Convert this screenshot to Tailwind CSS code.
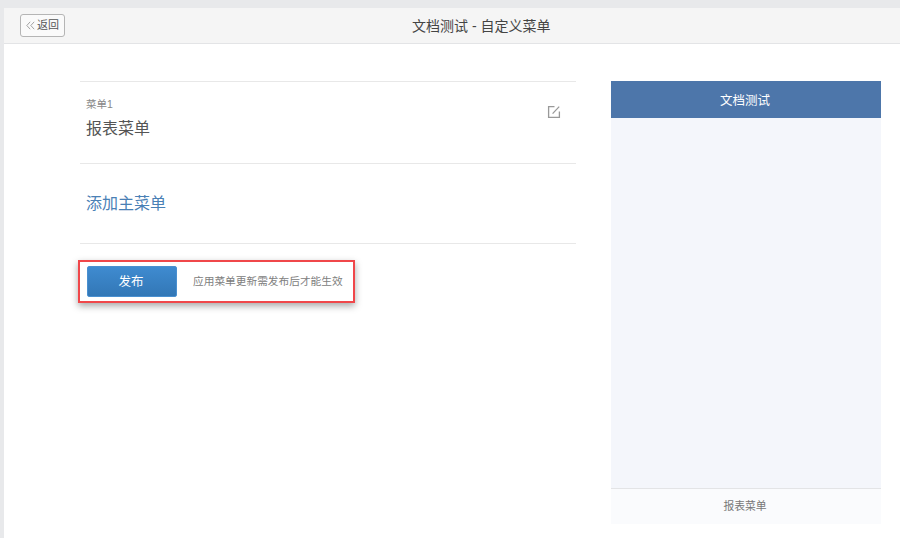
<!DOCTYPE html>
<html lang="zh-CN">
<head>
    <meta charset="UTF-8">
    <meta name="viewport" content="width=device-width, initial-scale=1.0">
    <title>自定义菜单</title>
    <script src="https://cdn.jsdelivr.net/npm/@tailwindcss/browser@4"></script>
</head>
<body class="w-[900px] h-[538px] overflow-hidden bg-[#e8e9eb] pt-2 pl-1 font-['Liberation_Sans','Noto_Sans_CJK_SC',sans-serif] text-[#333]">
    <div class="h-[530px] bg-white flex flex-col">
        <!-- header -->
        <div class="h-9 shrink-0 bg-[#f5f5f5] border-b border-[#e3e4e6] flex items-center relative pl-4">
            <button class="h-[23px] w-[45px] mb-[1px] bg-[#fafafa] border border-[#b5b5b5] rounded-[3px] flex items-center justify-center gap-[2px] text-[11px] text-[#555]">
                <svg class="w-[9px] h-[9px]" viewBox="0 0 9 9" fill="none" stroke="#999" stroke-width="0.9"><path d="M4.2 0.8 L0.8 4.5 L4.2 8.2 M8.2 0.8 L4.8 4.5 L8.2 8.2"/></svg>
                <span>返回</span>
            </button>
            <h1 class="absolute left-[408px] top-[9px] text-[14px] leading-[18px] whitespace-nowrap text-[#444]">文档测试 - 自定义菜单</h1>
        </div>

        <div class="flex pl-[76px] pt-[37px]">
            <!-- menu list -->
            <div class="w-[496px] shrink-0">
                <div class="h-[82px] border-t border-[#e8e8e8] flex justify-between pl-[6px] pr-[15px] pt-[15px]">
                    <div>
                        <div class="text-[10.5px] leading-[14px] text-[#888]">菜单1</div>
                        <div class="text-[16px] leading-[22px] mt-[7px] text-[#555]">报表菜单</div>
                    </div>
                    <svg class="w-[14px] h-[14px] mt-[8px]" viewBox="0 0 14 14" fill="none" stroke="#999" stroke-width="1.3"><path d="M7.5 1.6 H1.6 V12.4 H12.4 V6.5 M5.6 8.6 L12.2 1.6"/></svg>
                </div>
                <div class="h-[80px] border-t border-[#e8e8e8] flex items-center pl-[6px] text-[16px] text-[#4a80b5]">添加主菜单</div>
                <div class="border-t border-[#e8e8e8] pt-[22px] pl-[7px] flex items-center relative">
                    <button class="w-[90px] h-[31px] pt-[1px] pr-[2px] rounded-[2px] bg-gradient-to-b from-[#3f8bd0] to-[#3277b6] border border-[#4a90d0] text-white text-[12.5px]">发布</button>
                    <span class="ml-4 text-[10.7px] text-[#808080] whitespace-nowrap">应用菜单更新需发布后才能生效</span>
                    <!-- annotation box -->
                    <div class="absolute left-[-2px] top-[16px] w-[277px] h-[43px] border-2 border-[#f0474a] shadow-[0_3px_7px_rgba(0,0,0,0.35)] pointer-events-none"></div>
                </div>
            </div>

            <!-- phone preview -->
            <div class="w-[270px] h-[443px] ml-[35px] shrink-0 bg-[#f4f6fb] flex flex-col">
                <div class="h-[37px] shrink-0 bg-[#4d76aa] flex items-center justify-center pt-[3px] pr-[2px] text-white text-[12.5px]">文档测试</div>
                <div class="flex-1"></div>
                <div class="h-9 shrink-0 bg-[#fafbfd] border-t border-[#e3e4e6] flex items-center justify-center pr-[2px] text-[10.8px] text-[#777]">报表菜单</div>
            </div>
        </div>
    </div>
</body>
</html>
